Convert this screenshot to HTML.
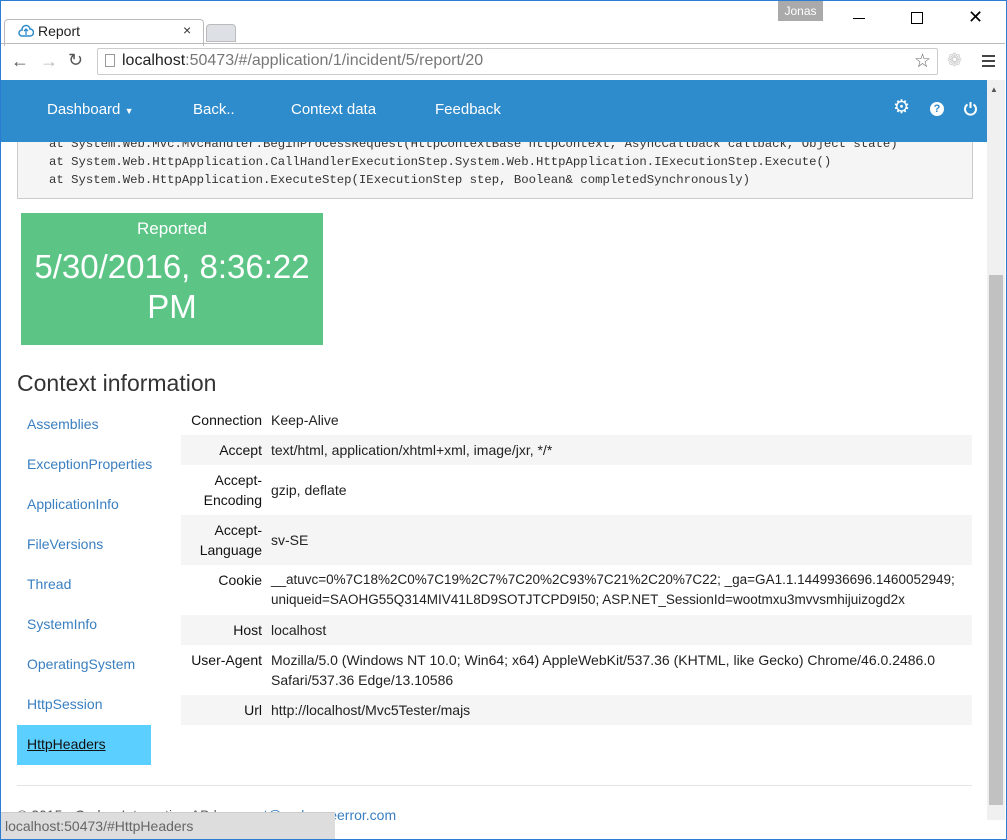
<!DOCTYPE html>
<html><head><meta charset="utf-8"><style>
*{box-sizing:border-box;margin:0;padding:0}
body{width:1007px;height:840px;overflow:hidden;background:#fff;font-family:"Liberation Sans",sans-serif;position:relative;}
.abs{position:absolute}
.nav a{position:absolute;top:101px;color:#fff;font-size:15px}
pre{font-family:"Liberation Mono",monospace;font-size:12.3px;color:#333;line-height:18px}
.side a{position:absolute;left:27px;color:#3a7fc0;font-size:14px}
.row{position:absolute;left:181px;width:791px;font-size:14px;color:#222}
.row .k{position:absolute;right:710px;text-align:right;width:90px;line-height:20px;color:#111}
.row .v{position:absolute;left:90px;line-height:20px}
.g{background:#f5f5f5}
</style></head><body>
<!-- title bar -->
<div class="abs" style="left:0;top:0;width:1005px;height:44px;background:#fff"></div>
<div class="abs" style="left:4px;top:19px;width:200px;height:27px;border:1px solid #bbb;border-bottom:none;border-radius:4px 4px 0 0;background:#fff"></div>
<div class="abs" style="left:206px;top:24px;width:30px;height:18px;background:#dde1e6;border:1px solid #bbb;border-radius:4px 4px 0 0"></div>
<div class="abs" style="left:0;top:43px;width:1005px;height:1px;background:#bbb"></div>
<svg class="abs" style="left:18px;top:24px" width="16" height="14"><path d="M4 12h8a3.5 3.5 0 0 0 0-7a4 4 0 0 0-8 1a3 3 0 0 0 0 6z" fill="none" stroke="#2e8bcc" stroke-width="1.5"/><path d="M8 11V5M6 7l2-2 2 2" stroke="#2e8bcc" fill="none" stroke-width="1.3"/></svg>
<div class="abs" style="left:38px;top:23px;font-size:14px;color:#222">Report</div>
<div class="abs" style="left:183px;top:22px;font-size:14px;color:#333">×</div>
<div class="abs" style="left:778px;top:1px;width:45px;height:20px;background:#aaa;color:#fff;font-size:12px;text-align:center;line-height:20px">Jonas</div>
<div class="abs" style="left:853px;top:18px;width:12px;height:1px;background:#000"></div>
<div class="abs" style="left:911px;top:12px;width:12px;height:12px;border:1px solid #000"></div>
<div class="abs" style="left:968px;top:7px;font-size:18px;color:#000">✕</div>
<!-- toolbar -->
<div class="abs" style="left:11px;top:51px;font-size:18px;color:#555">←</div>
<div class="abs" style="left:40px;top:51px;font-size:18px;color:#bbb">→</div>
<div class="abs" style="left:68px;top:50px;font-size:18px;color:#555">↻</div>
<div class="abs" style="left:97px;top:48px;width:841px;height:27px;border:1px solid #ccc;border-radius:2px;background:#fff"></div>
<div class="abs" style="left:105px;top:54px;width:10px;height:13px;border:1px solid #999"></div>
<div class="abs" style="left:122px;top:52px;font-size:16px;color:#777"><span style="color:#222">localhost</span>:50473/#/application/1/incident/5/report/20</div>
<div class="abs" style="left:914px;top:50px;font-size:19px;color:#666">☆</div>
<div class="abs" style="left:947px;top:50px;font-size:18px;color:#ccc">❁</div>
<div class="abs" style="left:982px;top:55px;width:13px;height:2px;background:#444;box-shadow:0 5px 0 #444,0 10px 0 #444"></div>
<!-- pre box -->
<div class="abs" style="left:17px;top:142px;width:956px;height:57px;background:#f5f5f5;border:1px solid #ccc;border-top:none"></div>
<pre class="abs" style="left:49px;top:135px">at System.Web.Mvc.MvcHandler.BeginProcessRequest(HttpContextBase httpContext, AsyncCallback callback, Object state)
at System.Web.HttpApplication.CallHandlerExecutionStep.System.Web.HttpApplication.IExecutionStep.Execute()
at System.Web.HttpApplication.ExecuteStep(IExecutionStep step, Boolean&amp; completedSynchronously)</pre>
<!-- nav -->
<div class="abs" style="left:1px;top:80px;width:986px;height:62px;background:#2e8bcc"></div>
<div class="nav"><a style="left:47px">Dashboard <span style="font-size:9px">▼</span></a><a style="left:193px">Back..</a><a style="left:291px">Context data</a><a style="left:435px">Feedback</a></div>
<div class="abs" style="left:893px;top:98px;color:#fff;font-size:19px;line-height:20px">⚙</div>
<div class="abs" style="left:930px;top:102px;width:14px;height:14px;border-radius:50%;background:#fff;color:#2e8bcc;font-size:11px;font-weight:bold;text-align:center;line-height:14px">?</div>
<svg class="abs" style="left:963px;top:101px" width="15" height="15"><path d="M4.5 3.5a5.5 5.5 0 1 0 6 0" fill="none" stroke="#fff" stroke-width="2"/><path d="M7.5 1v6" stroke="#fff" stroke-width="2"/></svg>
<!-- scrollbar -->
<div class="abs" style="left:987px;top:80px;width:18px;height:740px;background:#f0f0f0"></div>
<div class="abs" style="left:990px;top:85px;font-size:8px;color:#555">▲</div>
<div class="abs" style="left:989px;top:275px;width:14px;height:530px;background:#c1c1c1"></div>
<!-- green -->
<div class="abs" style="left:21px;top:213px;width:302px;height:132px;background:#5cc586;color:#fff;text-align:center">
<div style="font-size:17px;margin-top:6px">Reported</div>
<div style="font-size:33px;line-height:40px;margin-top:8px">5/30/2016, 8:36:22<br>PM</div></div>
<div class="abs" style="left:17px;top:370px;font-size:23px;color:#333">Context information</div>
<div class="side">
<a style="top:416px">Assemblies</a><a style="top:456px">ExceptionProperties</a><a style="top:496px">ApplicationInfo</a><a style="top:536px">FileVersions</a><a style="top:576px">Thread</a><a style="top:616px">SystemInfo</a><a style="top:656px">OperatingSystem</a><a style="top:696px">HttpSession</a></div>
<div class="abs" style="left:17px;top:725px;width:134px;height:40px;background:#5bcfff"></div>
<div class="abs" style="left:27px;top:736px;font-size:14px;color:#111;text-decoration:underline">HttpHeaders</div>
<div class="row" style="top:405px;height:30px"><div class="k" style="top:5px">Connection</div><div class="v" style="top:5px">Keep-Alive</div></div>
<div class="row g" style="top:435px;height:30px"><div class="k" style="top:5px">Accept</div><div class="v" style="top:5px">text/html, application/xhtml+xml, image/jxr, */*</div></div>
<div class="row" style="top:465px;height:50px"><div class="k" style="top:5px">Accept-<br>Encoding</div><div class="v" style="top:15px">gzip, deflate</div></div>
<div class="row g" style="top:515px;height:50px"><div class="k" style="top:5px">Accept-<br>Language</div><div class="v" style="top:15px">sv-SE</div></div>
<div class="row" style="top:565px;height:50px"><div class="k" style="top:5px">Cookie</div><div class="v" style="top:5px;font-size:13.5px;white-space:nowrap">__atuvc=0%7C18%2C0%7C19%2C7%7C20%2C93%7C21%2C20%7C22; _ga=GA1.1.1449936696.1460052949;<br>uniqueid=SAOHG55Q314MIV41L8D9SOTJTCPD9I50; ASP.NET_SessionId=wootmxu3mvvsmhijuizogd2x</div></div>
<div class="row g" style="top:615px;height:30px"><div class="k" style="top:5px">Host</div><div class="v" style="top:5px">localhost</div></div>
<div class="row" style="top:645px;height:50px"><div class="k" style="top:5px">User-Agent</div><div class="v" style="top:5px;white-space:nowrap">Mozilla/5.0 (Windows NT 10.0; Win64; x64) AppleWebKit/537.36 (KHTML, like Gecko) Chrome/46.0.2486.0<br>Safari/537.36 Edge/13.10586</div></div>
<div class="row g" style="top:695px;height:30px"><div class="k" style="top:5px">Url</div><div class="v" style="top:5px">http://localhost/Mvc5Tester/majs</div></div>
<div class="abs" style="left:17px;top:785px;width:955px;height:1px;background:#e5e5e5"></div>
<div class="abs" style="left:17px;top:807px;font-size:14px;color:#555">© 2015 - Coderr Integration AB | <span style="color:#3a7fc0">support@coderrueerror.com</span></div>
<div class="abs" style="left:0;top:812px;width:335px;height:27px;background:#ddd;border-top:1px solid #ccc;font-size:14px;color:#666;padding:5px 5px">localhost:50473/#HttpHeaders</div>
<div class="abs" style="left:0;top:0;width:1007px;height:840px;border:1px solid #2b7cd3"></div>
</body></html>
